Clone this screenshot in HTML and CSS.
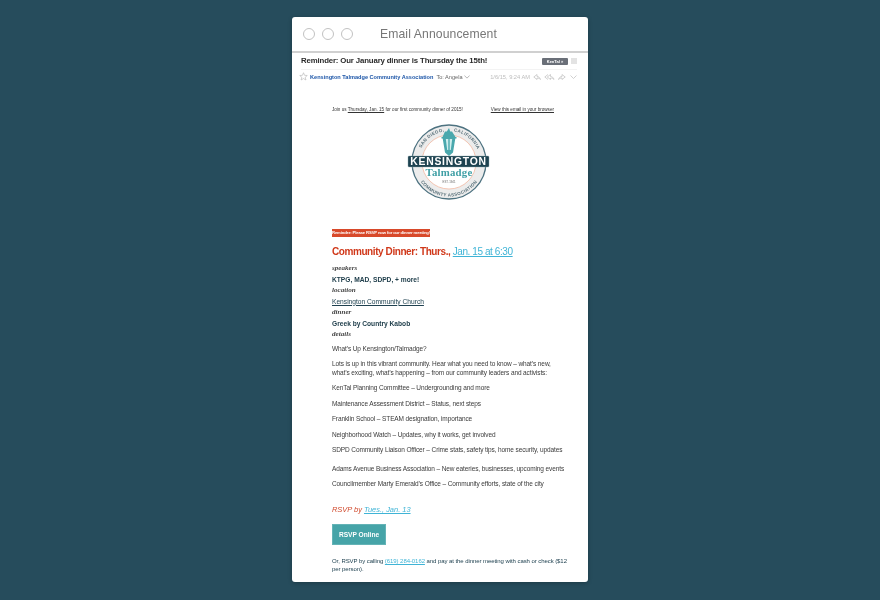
FILE: index.html
```html
<!DOCTYPE html>
<html lang="en">
<head>
<meta charset="utf-8">
<title>Email Announcement</title>
<link rel="stylesheet" href="styles.css">
</head>
<body>
<main class="window">
  <header class="titlebar">
    <div class="lights"><span class="light"></span><span class="light"></span><span class="light"></span></div>
    <h1 class="title">Email Announcement</h1>
  </header>
  <div class="mailhead">
    <div class="subject-row">
      <h2 class="subject">Reminder: Our January dinner is Thursday the 15th!</h2>
      <span class="tag">KenTal ×</span>
      <span class="tag-box"></span>
    </div>
    <div class="from-row">
      <svg class="star" viewBox="0 0 10 10" width="9" height="9"><path d="M5 .8l1.200 2.900 3 .2-2.300 2 .8 3L5 7.300 2.300 8.900l.8-3-2.300-2 3-.2z" fill="none" stroke="#b5b5b5" stroke-width=".7"/></svg>
      <span class="from">Kensington Talmadge Community Association</span>
      <span class="to">To: Angela</span>
      <svg class="caret" viewBox="0 0 8 5" width="6" height="4"><path d="M.5.5L4 4 7.500.5" fill="none" stroke="#888" stroke-width=".8"/></svg>
      <span class="date">1/6/15, 9:24 AM</span>
      <svg class="actions" viewBox="0 0 44 8" width="44" height="8" fill="none" stroke="#c4c4c4" stroke-width=".8">
        <path d="M7.500 6.500C7 4.500 5.500 3.500 4 3.500V1.500L.8 4 4 6.500V5C5.500 5 6.500 5.500 7.500 6.500z"/>
        <path d="M21 6.500C20.500 4.500 19 3.500 17.500 3.500V1.500L14.300 4l3.200 2.500V5C19 5 20 5.500 21 6.500zM15 1.500L11.800 4 15 6.500"/>
        <path d="M25.500 6.500C26 4.500 27.500 3.500 29 3.500V1.500L32.200 4 29 6.500V5C27.500 5 26.500 5.500 25.500 6.500z"/>
        <path d="M37.500 2.500L40.500 5.500 43.500 2.500"/>
      </svg>
    </div>
  </div>
  <article class="email">
    <div class="preheader">
      <span>Join us <u>Thursday, Jan. 15</u> for our first community dinner of 2015!</span>
      <u>View this email in your browser</u>
    </div>
    <div class="logo">
      <svg viewBox="0 0 84 78" width="84" height="78" role="img" aria-label="Kensington Talmadge Community Association logo">
        <defs>
          <path id="arc-top" d="M11 38a31 31 0 0 1 62 0"/>
          <path id="arc-bottom" d="M7.500 38a34.500 34.500 0 0 0 69 0"/>
        </defs>
        <circle cx="42" cy="38" r="37" fill="#ececec" stroke="#4d7280" stroke-width="1.300"/>
        <circle cx="42" cy="38" r="27" fill="#fff" stroke="#f2b9a2" stroke-width=".8"/>
        <text class="arc-text"><textPath href="#arc-top" startOffset="44" text-anchor="end">SAN DIEGO,</textPath></text>
        <text class="arc-text"><textPath href="#arc-top" startOffset="53.500" text-anchor="start">CALIFORNIA</textPath></text>
        <text class="arc-text"><textPath href="#arc-bottom" startOffset="50%" text-anchor="middle">COMMUNITY ASSOCIATION</textPath></text>
        <path d="M42 4l1.200 3.500H45l3.500 5.500h1v1.500h-1.200l-2.300 14-4 3.500-4-3.500-2.300-14h-1.200V13h1L38 7.500h1.800z" fill="#4aa8ad"/>
        <path d="M38.800 15h2.500v11h-1.100zM42.700 15h2.500l-1.400 11h-1.100z" fill="#cfeeee"/>
        <rect class="band" x="1" y="32" width="81" height="11" rx="1"/>
        <text class="logo-main" x="41.500" y="41" text-anchor="middle">KENSINGTON</text>
        <text class="logo-script" x="42" y="51.500" text-anchor="middle">Talmadge</text>
        <text class="logo-est" x="42" y="59" text-anchor="middle">EST. 1941</text>
      </svg>
    </div>
    <p class="alert"><span class="alert-text">Reminder: Please RSVP now for our dinner meeting!</span></p>
    <h3 class="headline">Community Dinner: Thurs., <a class="link" href="#">Jan. 15 at 6:30</a></h3>
    <p class="label">speakers</p>
    <p class="strong">KTPG, MAD, SDPD, + more!</p>
    <p class="label">location</p>
    <p class="plain"><a class="church" href="#">Kensington Community Church</a></p>
    <p class="label">dinner</p>
    <p class="strong">Greek by Country Kabob</p>
    <p class="label">details</p>
    <p class="body first">What’s Up Kensington/Talmadge?</p>
    <p class="body">Lots is up in this vibrant community. Hear what you need to know – what’s new, what’s exciting, what’s happening – from our community leaders and activists:</p>
    <p class="body item">KenTal Planning Committee – Undergrounding and more</p>
    <p class="body item">Maintenance Assessment District – Status, next steps</p>
    <p class="body item">Franklin School – STEAM designation, importance</p>
    <p class="body item">Neighborhood Watch – Updates, why it works, get involved</p>
    <p class="body item">SDPD Community Liaison Officer – Crime stats, safety tips, home security, updates</p>
    <p class="body item wide">Adams Avenue Business Association – New eateries, businesses, upcoming events</p>
    <p class="body item">Councilmember Marty Emerald’s Office – Community efforts, state of the city</p>
    <p class="rsvp">RSVP by <a class="link" href="#">Tues., Jan. 13</a></p>
    <a class="button" href="#">RSVP Online</a>
    <p class="closing">Or, RSVP by calling <a class="link" href="#">(619) 284-0162</a> and pay at the dinner meeting with cash or check ($12 per person).</p>
  </article>
</main>
</body>
</html>
```
FILE: styles.css
```css
* { box-sizing: border-box; }
html, body { margin: 0; height: 600px; overflow: hidden; }
body {
  background: #264c5c;
  padding-top: 17px;
  font-family: "Liberation Sans", Arial, sans-serif;
  color: #333;
}
.window {
  width: 296px;
  height: 565px;
  margin: 0 auto;
  background: #fff;
  border-radius: 3px;
  overflow: hidden;
  box-shadow: 0 1px 4px rgba(0,0,0,.25);
  filter: blur(.25px);
}
.titlebar {
  height: 36px;
  display: flex;
  align-items: center;
  border-bottom: 2px solid #d0d0d0;
  padding: 0 0 0 11px;
}
.lights { display: flex; gap: 7px; }
.light {
  width: 12px; height: 12px;
  border: 1px solid #c2c2c2;
  border-radius: 50%;
}
.title {
  margin: 0 0 0 27px;
  font: 400 12.200px/16px "Liberation Sans", sans-serif;
  color: #777;
  letter-spacing: .1px;
}
.mailhead { padding: 0 11px 0 9px; }
.subject-row {
  height: 17px;
  display: flex;
  align-items: center;
  border-bottom: 1px solid #f3f3f3;
}
.subject {
  margin: 0;
  flex: 1;
  font: 700 7.800px/12px "Liberation Sans", sans-serif;
  color: #2a2a2a;
  white-space: nowrap;
  letter-spacing: -.14px;
}
.tag {
  width: 26px; height: 7px;
  background: #6a6f78;
  color: #fff;
  font: 700 4px/7px "Liberation Sans", sans-serif;
  text-align: center;
  border-radius: 1px;
  white-space: nowrap;
}
.tag-box {
  width: 6px; height: 6px;
  margin-left: 3px;
  background: #e3e3e3;
}
.from-row {
  height: 13px;
  display: flex;
  align-items: center;
  font-size: 5.600px;
}
.star { margin-right: 2px; margin-left: -2px; flex: none; }
.from { color: #1d56a8; font-weight: 700; white-space: nowrap; }
.to { margin-left: 3px; color: #666; white-space: nowrap; }
.caret { margin-left: 1px; flex: none; }
.date { margin-left: auto; color: #bdbdbd; white-space: nowrap; font-size: 5.700px; }
.actions { margin-left: 3px; flex: none; }
.email { padding: 22.500px 30px 0 40px; }
.preheader {
  display: flex;
  justify-content: space-between;
  width: 222px;
  font-size: 4.600px;
  line-height: 7px;
  color: #333;
  white-space: nowrap;
}
.logo { display: flex; justify-content: center; padding: 11.500px 0 0; width: 234px; height: 89.500px; }
.band { fill: #1d4250; stroke: #8ea6af; stroke-width: .4; }
.arc-text { font: 700 4.500px "Liberation Sans", sans-serif; fill: #58707a; letter-spacing: .3px; }
.logo-main { font: 700 10.400px "Liberation Sans", sans-serif; fill: #fff; letter-spacing: .75px; }
.logo-script { font: 700 10.800px "Liberation Serif", serif; fill: #3f9fa5; letter-spacing: .2px; }
.logo-est { font: 400 2.800px "Liberation Sans", sans-serif; fill: #666; }
.alert { margin: 27.500px 0 0; font-size: 4.200px; line-height: 7px; }
.alert-text {
  background: #d8492a;
  color: #fff;
  font-weight: 700;
  padding: 1.400px 0;
  white-space: nowrap;
  letter-spacing: -.13px;
}
.headline {
  margin: 6px 0 3px;
  font: 700 10px/17px "Liberation Sans", sans-serif;
  color: #d0381a;
  white-space: nowrap;
  letter-spacing: -.42px;
}
.link { color: #3fb4d6; font-weight: 400; text-decoration: underline; }
.label {
  margin: 0;
  height: 11px;
  font: italic 700 7.100px/11px "Liberation Serif", serif;
  color: #444;
}
.strong {
  margin: 0;
  height: 11.300px;
  font: 700 6.650px/11.300px "Liberation Sans", sans-serif;
  color: #203f4c;
  white-space: nowrap;
}
.plain { margin: 0; height: 11.300px; font-size: 6.650px; line-height: 11.300px; white-space: nowrap; }
.church { color: #1f4150; text-decoration: underline; }
.body {
  margin: 0 0 6px;
  width: 232px;
  font-size: 6.500px;
  letter-spacing: -.11px;
  line-height: 9px;
  color: #3a3a3a;
}
.first { margin-top: 4px; }
.item { margin-bottom: 6.500px; white-space: nowrap; }
.wide { margin-top: 10px; margin-bottom: 6px; }
.rsvp {
  margin: 15.500px 0 8px;
  font: italic 400 7.450px/12px "Liberation Sans", sans-serif;
  color: #d0492c;
}
.button {
  display: block;
  width: 54px; height: 21px;
  background: #46a4a8;
  color: #fff;
  font-size: 6.600px;
  font-weight: 700;
  line-height: 19px;
  text-align: center;
  text-decoration: none;
  border: 1px solid #64b3b6;
}
.closing {
  margin: 12px 0 0;
  width: 238px;
  font-size: 6px;
  letter-spacing: -.07px;
  line-height: 8.500px;
  color: #1f4150;
}
```
